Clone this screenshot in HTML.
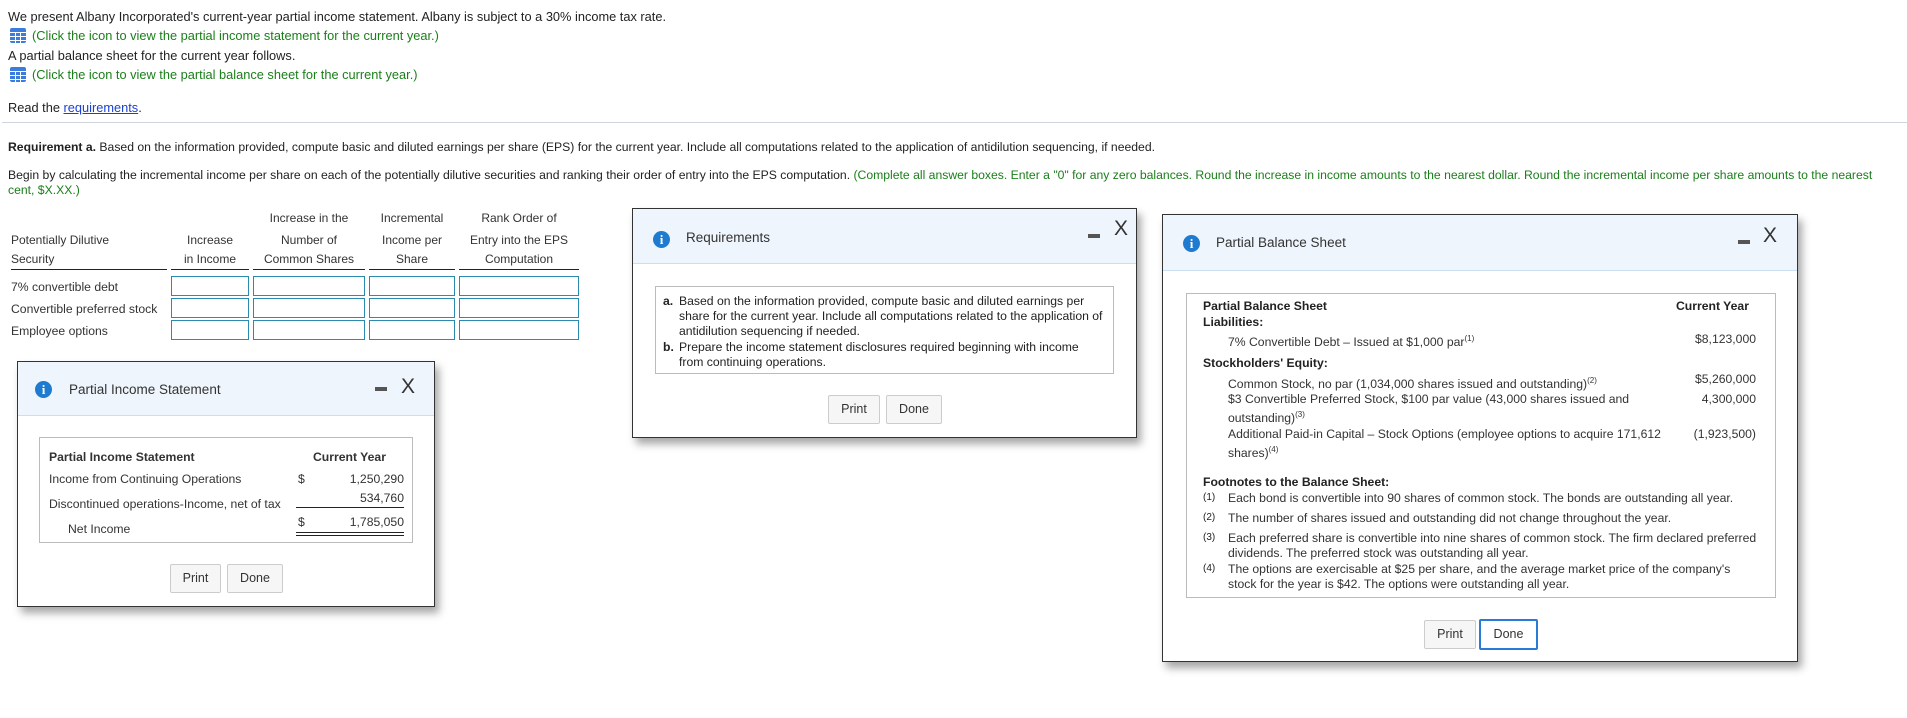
<!DOCTYPE html>
<html><head><meta charset="utf-8">
<style>
*{margin:0;padding:0;box-sizing:border-box}
body{width:1907px;height:718px;background:#fff;font-family:"Liberation Sans",Arial,sans-serif;font-size:12.2px;color:#222;position:relative;overflow:hidden}
.a{position:absolute;white-space:nowrap}
.g{color:#1a7f1a}
.ic{position:absolute;width:16px;height:15px;background:#3b7ddd;border-radius:2px}
.ic i{position:absolute;background:#fff}
.inp{position:absolute;height:20px;border:1px solid #2b8ab0;background:#fff}
.th{position:absolute;text-align:center;font-size:12px;color:#333}
.dlg{position:absolute;background:#fff;border:1px solid #333;box-shadow:4px 6px 8px rgba(0,0,0,.35)}
.hd{position:absolute;left:0;right:0;top:0;background:#eff5fd;border-bottom:1px solid #c9dff3}
.info{position:absolute;width:17px;height:17px;border-radius:50%;background:#1f7bd0;color:#fff;font-weight:bold;font-family:"Liberation Serif",serif;font-size:13px;text-align:center;line-height:17px}
.ttl{position:absolute;font-size:13.5px;color:#333}
.min{position:absolute;width:12px;height:4px;background:#555}
.x{position:absolute;font-size:21px;color:#333;line-height:20px}
.box{position:absolute;border:1px solid #bbb}
.btn{position:absolute;border:1px solid #ccc;background:#f6f6f6;border-radius:2px;text-align:center;font-size:12.5px;color:#333}
.s{font-size:12.2px;color:#333}
.t{font-size:12.8px}
sup{font-size:8px}
</style></head><body>

<div class="a t" style="left:8px;top:9px">We present Albany Incorporated's current-year partial income statement. Albany is subject to a 30% income tax rate.</div>
<div class="ic" style="left:10px;top:28px"><i style="left:0;top:4px;width:16px;height:1px"></i><i style="left:0;top:8px;width:16px;height:1px"></i><i style="left:0;top:12px;width:16px;height:1px"></i><i style="left:5px;top:4px;width:1px;height:11px"></i><i style="left:10px;top:4px;width:1px;height:11px"></i></div>
<div class="a g t" style="left:32px;top:28px">(Click the icon to view the partial income statement for the current year.)</div>
<div class="a t" style="left:8px;top:48px">A partial balance sheet for the current year follows.</div>
<div class="ic" style="left:10px;top:67px"><i style="left:0;top:4px;width:16px;height:1px"></i><i style="left:0;top:8px;width:16px;height:1px"></i><i style="left:0;top:12px;width:16px;height:1px"></i><i style="left:5px;top:4px;width:1px;height:11px"></i><i style="left:10px;top:4px;width:1px;height:11px"></i></div>
<div class="a g t" style="left:32px;top:67px">(Click the icon to view the partial balance sheet for the current year.)</div>
<div class="a t" style="left:8px;top:100px">Read the <span style="color:#1a3fd6;text-decoration:underline">requirements</span>.</div>
<div class="a" style="left:2px;top:122px;width:1905px;height:1px;background:#d0d4de"></div>
<div class="a" style="left:8px;top:140px"><b>Requirement a.</b> Based on the information provided, compute basic and diluted earnings per share (EPS) for the current year. Include all computations related to the application of antidilution sequencing, if needed.</div>
<div class="a" style="left:8px;top:168px">Begin by calculating the incremental income per share on each of the potentially dilutive securities and ranking their order of entry into the EPS computation. <span class="g">(Complete all answer boxes. Enter a "0" for any zero balances. Round the increase in income amounts to the nearest dollar. Round the incremental income per share amounts to the nearest</span></div>
<div class="a g" style="left:8px;top:183px">cent, $X.XX.)</div>

<div class="th" style="left:253px;width:112px;top:211px">Increase in the</div>
<div class="th" style="left:369px;width:86px;top:211px">Incremental</div>
<div class="th" style="left:459px;width:120px;top:211px">Rank Order of</div>
<div class="th" style="left:11px;top:233px;text-align:left">Potentially Dilutive</div>
<div class="th" style="left:171px;width:78px;top:233px">Increase</div>
<div class="th" style="left:253px;width:112px;top:233px">Number of</div>
<div class="th" style="left:369px;width:86px;top:233px">Income per</div>
<div class="th" style="left:459px;width:120px;top:233px">Entry into the EPS</div>
<div class="th" style="left:11px;top:252px;text-align:left">Security</div>
<div class="th" style="left:171px;width:78px;top:252px">in Income</div>
<div class="th" style="left:253px;width:112px;top:252px">Common Shares</div>
<div class="th" style="left:369px;width:86px;top:252px">Share</div>
<div class="th" style="left:459px;width:120px;top:252px">Computation</div>
<div class="a" style="left:11px;top:269px;width:156px;height:1px;background:#222"></div>
<div class="a" style="left:171px;top:269px;width:78px;height:1px;background:#222"></div>
<div class="a" style="left:253px;top:269px;width:112px;height:1px;background:#222"></div>
<div class="a" style="left:369px;top:269px;width:86px;height:1px;background:#222"></div>
<div class="a" style="left:459px;top:269px;width:120px;height:1px;background:#222"></div>
<div class="a s" style="left:11px;top:280px">7% convertible debt</div>
<div class="a s" style="left:11px;top:302px">Convertible preferred stock</div>
<div class="a s" style="left:11px;top:324px">Employee options</div>
<div class="inp" style="left:171px;top:276px;width:78px"></div><div class="inp" style="left:253px;top:276px;width:112px"></div><div class="inp" style="left:369px;top:276px;width:86px"></div><div class="inp" style="left:459px;top:276px;width:120px"></div>
<div class="inp" style="left:171px;top:298px;width:78px"></div><div class="inp" style="left:253px;top:298px;width:112px"></div><div class="inp" style="left:369px;top:298px;width:86px"></div><div class="inp" style="left:459px;top:298px;width:120px"></div>
<div class="inp" style="left:171px;top:320px;width:78px"></div><div class="inp" style="left:253px;top:320px;width:112px"></div><div class="inp" style="left:369px;top:320px;width:86px"></div><div class="inp" style="left:459px;top:320px;width:120px"></div>

<!-- Income statement dialog -->
<div class="dlg" style="left:17px;top:361px;width:418px;height:246px">
 <div class="hd" style="height:54px"></div>
 <div class="info" style="left:17px;top:19px">i</div>
 <div class="ttl" style="left:51px;top:20px">Partial Income Statement</div>
 <div class="min" style="left:357px;top:25px"></div>
 <div class="x" style="left:383px;top:15px">X</div>
 <div class="box" style="left:21px;top:75px;width:374px;height:106px"></div>
 <div class="a s" style="left:31px;top:88px;font-weight:bold">Partial Income Statement</div>
 <div class="a s" style="left:295px;top:88px;font-weight:bold">Current Year</div>
 <div class="a s" style="left:31px;top:110px">Income from Continuing Operations</div>
 <div class="a s" style="left:280px;top:110px">$</div>
 <div class="a s" style="left:326px;top:110px;width:60px;text-align:right">1,250,290</div>
 <div class="a s" style="left:31px;top:135px">Discontinued operations-Income, net of tax</div>
 <div class="a s" style="left:326px;top:129px;width:60px;text-align:right">534,760</div>
 <div class="a" style="left:278px;top:145px;width:108px;height:1px;background:#222"></div>
 <div class="a s" style="left:50px;top:160px">Net Income</div>
 <div class="a s" style="left:280px;top:153px">$</div>
 <div class="a s" style="left:326px;top:153px;width:60px;text-align:right">1,785,050</div>
 <div class="a" style="left:278px;top:170px;width:108px;height:4px;border-top:1px solid #222;border-bottom:1px solid #222"></div>
 <div class="btn" style="left:152px;top:202px;width:51px;height:29px;line-height:27px">Print</div>
 <div class="btn" style="left:209px;top:202px;width:56px;height:29px;line-height:27px">Done</div>
</div>

<!-- Requirements dialog -->
<div class="dlg" style="left:632px;top:208px;width:505px;height:230px">
 <div class="hd" style="height:55px"></div>
 <div class="info" style="left:20px;top:22px">i</div>
 <div class="ttl" style="left:53px;top:21px">Requirements</div>
 <div class="min" style="left:455px;top:25px"></div>
 <div class="x" style="left:481px;top:10px">X</div>
 <div class="box" style="left:22px;top:77px;width:459px;height:88px"></div>
 <div class="a s" style="left:30px;top:85px;line-height:15px;color:#222"><b>a.</b></div>
 <div class="a s" style="left:46px;top:85px;line-height:15px;color:#222">Based on the information provided, compute basic and diluted earnings per<br>share for the current year. Include all computations related to the application of<br>antidilution sequencing if needed.</div>
 <div class="a s" style="left:30px;top:131px;line-height:15px;color:#222"><b>b.</b></div>
 <div class="a s" style="left:46px;top:131px;line-height:15px;color:#222">Prepare the income statement disclosures required beginning with income<br>from continuing operations.</div>
 <div class="btn" style="left:195px;top:186px;width:52px;height:29px;line-height:27px">Print</div>
 <div class="btn" style="left:253px;top:186px;width:56px;height:29px;line-height:27px">Done</div>
</div>

<!-- Balance sheet dialog -->
<div class="dlg" style="left:1162px;top:214px;width:636px;height:448px">
 <div class="hd" style="height:56px"></div>
 <div class="info" style="left:20px;top:20px">i</div>
 <div class="ttl" style="left:53px;top:20px">Partial Balance Sheet</div>
 <div class="min" style="left:575px;top:25px"></div>
 <div class="x" style="left:600px;top:11px">X</div>
 <div class="box" style="left:23px;top:78px;width:590px;height:305px"></div>
 <div class="a s" style="left:40px;top:84px;font-weight:bold;color:#222">Partial Balance Sheet</div>
 <div class="a s" style="left:513px;top:84px;font-weight:bold;color:#222">Current Year</div>
 <div class="a s" style="left:40px;top:100px;font-weight:bold;color:#222">Liabilities:</div>
 <div class="a s" style="left:65px;top:119px">7% Convertible Debt – Issued at $1,000 par<sup>(1)</sup></div>
 <div class="a s" style="left:520px;top:117px;width:73px;text-align:right">$8,123,000</div>
 <div class="a s" style="left:40px;top:141px;font-weight:bold;color:#222">Stockholders' Equity:</div>
 <div class="a s" style="left:65px;top:161px">Common Stock, no par (1,034,000 shares issued and outstanding)<sup>(2)</sup></div>
 <div class="a s" style="left:520px;top:157px;width:73px;text-align:right">$5,260,000</div>
 <div class="a s" style="left:65px;top:177px">$3 Convertible Preferred Stock, $100 par value (43,000 shares issued and</div>
 <div class="a s" style="left:520px;top:177px;width:73px;text-align:right">4,300,000</div>
 <div class="a s" style="left:65px;top:195px">outstanding)<sup>(3)</sup></div>
 <div class="a s" style="left:65px;top:212px">Additional Paid-in Capital – Stock Options (employee options to acquire 171,612</div>
 <div class="a s" style="left:510px;top:212px;width:83px;text-align:right">(1,923,500)</div>
 <div class="a s" style="left:65px;top:230px">shares)<sup>(4)</sup></div>
 <div class="a s" style="left:40px;top:260px;font-weight:bold;color:#222">Footnotes to the Balance Sheet:</div>
 <div class="a" style="left:40px;top:277px;font-size:10px">(1)</div>
 <div class="a s" style="left:65px;top:276px">Each bond is convertible into 90 shares of common stock. The bonds are outstanding all year.</div>
 <div class="a" style="left:40px;top:297px;font-size:10px">(2)</div>
 <div class="a s" style="left:65px;top:296px">The number of shares issued and outstanding did not change throughout the year.</div>
 <div class="a" style="left:40px;top:317px;font-size:10px">(3)</div>
 <div class="a s" style="left:65px;top:316px;line-height:15px">Each preferred share is convertible into nine shares of common stock. The firm declared preferred<br>dividends. The preferred stock was outstanding all year.</div>
 <div class="a" style="left:40px;top:348px;font-size:10px">(4)</div>
 <div class="a s" style="left:65px;top:347px;line-height:15px">The options are exercisable at $25 per share, and the average market price of the company's<br>stock for the year is $42. The options were outstanding all year.</div>
 <div class="btn" style="left:261px;top:405px;width:52px;height:29px;line-height:27px">Print</div>
 <div class="btn" style="left:316px;top:404px;width:59px;height:31px;line-height:27px;border:2px solid #2a7bd4;background:#fff">Done</div>
</div>
</body></html>
